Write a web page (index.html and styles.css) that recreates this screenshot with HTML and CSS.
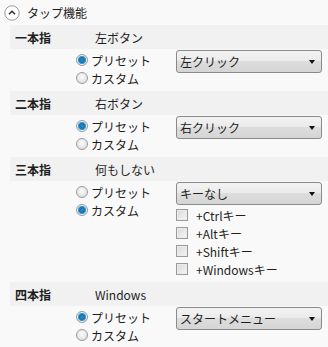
FILE: index.html
```html
<!DOCTYPE html>
<html lang="ja">
<head>
<meta charset="UTF-8">
<title>タップ機能</title>
<link rel="stylesheet" href="styles.css">
</head>
<body>
<div class="top">
  <span class="expander">
    <svg width="16" height="16" viewBox="0 0 16 16"><circle cx="8" cy="8" r="7.2" fill="#fff" stroke="#9a9a9a" stroke-width="1"/><path d="M5 9.3 L8 6.3 L11 9.3" fill="none" stroke="#333" stroke-width="1.6"/></svg>
  </span>
  <span>タップ機能</span>
</div>

<div class="section">
  <div class="section-head"><span class="name">一本指</span><span>左ボタン</span></div>
  <div class="section-body">
    <div class="options">
      <div class="opt"><span class="radio on"></span>プリセット</div>
      <div class="opt"><span class="radio"></span>カスタム</div>
    </div>
    <div class="right">
      <div class="select">左クリック<span class="arrow"></span></div>
    </div>
  </div>
</div>

<div class="section">
  <div class="section-head"><span class="name">二本指</span><span>右ボタン</span></div>
  <div class="section-body">
    <div class="options">
      <div class="opt"><span class="radio on"></span>プリセット</div>
      <div class="opt"><span class="radio"></span>カスタム</div>
    </div>
    <div class="right">
      <div class="select">右クリック<span class="arrow"></span></div>
    </div>
  </div>
</div>

<div class="section">
  <div class="section-head"><span class="name">三本指</span><span>何もしない</span></div>
  <div class="section-body">
    <div class="options">
      <div class="opt"><span class="radio"></span>プリセット</div>
      <div class="opt"><span class="radio on"></span>カスタム</div>
    </div>
    <div class="right">
      <div class="select">キーなし<span class="arrow"></span></div>
      <div class="checks">
        <div class="opt"><span class="check"></span>+Ctrlキー</div>
        <div class="opt"><span class="check"></span>+Altキー</div>
        <div class="opt"><span class="check"></span>+Shiftキー</div>
        <div class="opt"><span class="check"></span>+Windowsキー</div>
      </div>
    </div>
  </div>
</div>

<div class="section">
  <div class="section-head"><span class="name">四本指</span><span>Windows</span></div>
  <div class="section-body">
    <div class="options">
      <div class="opt"><span class="radio on"></span>プリセット</div>
      <div class="opt"><span class="radio"></span>カスタム</div>
    </div>
    <div class="right">
      <div class="select">スタートメニュー<span class="arrow"></span></div>
    </div>
  </div>
</div>
</body>
</html>
```

FILE: styles.css
```css
body {
margin: 0;
background-color: #f9f9f9;
font-family: "Noto Sans CJK JP", "Noto Sans", sans-serif;
font-size: 12px;
color: #1e1e1e;
}
.top {
display: flex;
align-items: center;
height: 25px;
padding-left: 4px;
}
.expander {
display: flex;
margin-right: 7px;
}
.section {
margin-left: 10px;
}
.section-head {
display: flex;
align-items: center;
height: 24px;
padding-left: 5px;
background-color: #f1f1f1;
}
.name {
width: 80px;
font-weight: bold;
}
.section-body {
display: flex;
padding: 1px 0 4px 66px;
}
.options {
width: 100px;
padding-top: 1px;
}
.opt {
display: flex;
align-items: center;
height: 18px;
white-space: nowrap;
}
.radio {
width: 10px;
height: 10px;
border: 1px solid #9c9c9c;
border-radius: 50%;
margin-right: 3px;
background: radial-gradient(circle at 50% 40%, #fdfdfd, #d6d6d6);
}
.radio.on {
background: radial-gradient(circle at 50% 50%, #2e8fcf 0, #1b6fa8 2.5px, #4ab0e8 4px, #f0f0f0 4.5px, #d8d8d8 6px);
}
.right {
width: 146px;
}
.select {
position: relative;
height: 21px;
line-height: 21px;
border: 1px solid #8a8a8a;
border-radius: 3px;
padding-left: 3px;
background: linear-gradient(#f3f3f3, #ebebeb 45%, #dddddd 50%, #d5d5d5);
}
.arrow {
position: absolute;
right: 6px;
top: 9px;
border-left: 3.5px solid transparent;
border-right: 3.5px solid transparent;
border-top: 4px solid #111;
}
.checks {
padding-top: 1px;
}
.check {
width: 10px;
height: 10px;
border: 1px solid #9a9a9a;
margin-right: 8px;
background: linear-gradient(135deg, #d9d9d9, #f6f6f6);
box-shadow: inset 0 0 0 1px #ececec;
}
```
